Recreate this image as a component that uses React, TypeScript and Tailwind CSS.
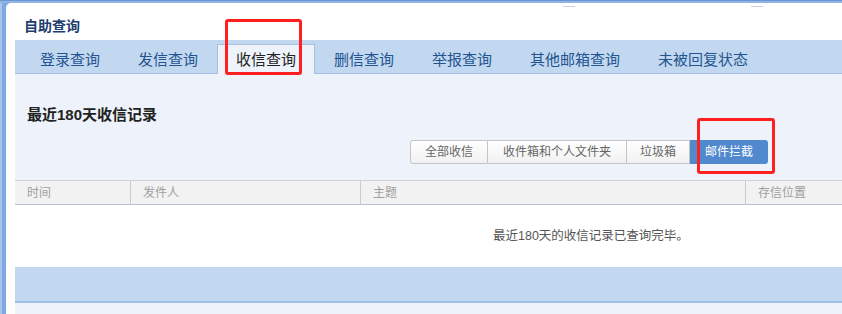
import React from "react";

const FONT = { fontFamily: '"Liberation Sans", "Noto Sans CJK SC", sans-serif' };

const tabs = ["登录查询", "发信查询", "收信查询", "删信查询", "举报查询", "其他邮箱查询", "未被回复状态"];

export default function App() {
  return (
    <div className="relative w-[842px] h-[314px] overflow-hidden bg-[#7fa9e2] flex flex-col" style={FONT}>
      <div className="h-[1px] bg-[#6a96d4] shrink-0" />
      <div className="h-[2px] bg-[#8fb4e6] shrink-0" />
      <div className="flex flex-1 min-h-0">
        <div className="w-[2px] bg-[#a6c4ee]" />
        <div className="w-[4px] bg-[#7fa9e2]" />
        <div className="flex-1 bg-white rounded-tl-[5px] pl-[9px] flex flex-col min-w-0">
          <div className="h-[37px] shrink-0 flex items-center pl-[9px] pt-[8px]">
            <span className="text-[14px] font-bold text-[#1d3d6f] leading-none">自助查询</span>
          </div>
          <div className="h-[34px] shrink-0 bg-[#c2d8f1] border-b border-[#a3bfe0] flex items-end pl-[6px]">
            {tabs.map((t) =>
              t === "收信查询" ? (
                <div
                  key={t}
                  className="h-[30px] -mb-px px-[18px] border border-b-0 border-[#a6c0df] bg-[#eef3fb] flex items-center text-[15px] text-[#222] leading-none"
                >
                  {t}
                </div>
              ) : (
                <div
                  key={t}
                  className="h-[30px] -mb-px px-[18px] border border-transparent border-b-0 flex items-center text-[15px] text-[#24548f] leading-none"
                >
                  {t}
                </div>
              )
            )}
          </div>
          <div className="h-[106px] shrink-0 bg-[#eef3fb] flex flex-col">
            <div className="pt-[33px] pl-[12px] text-[15px] font-bold text-[#222] leading-[16px]">最近180天收信记录</div>
            <div className="mt-[17px] flex justify-end pr-[74px]">
              <div className="flex h-[24px] text-[12px] leading-none">
                <div className="px-[14px] flex items-center border border-[#c4c4c4] rounded-l-[3px] bg-gradient-to-b from-white to-[#f1f1f1] text-[#666]">全部收信</div>
                <div className="px-[15px] flex items-center border border-l-0 border-[#c4c4c4] bg-gradient-to-b from-white to-[#f1f1f1] text-[#666]">收件箱和个人文件夹</div>
                <div className="px-[13px] flex items-center border border-l-0 border-[#c4c4c4] bg-gradient-to-b from-white to-[#f1f1f1] text-[#666]">垃圾箱</div>
                <div className="px-[15px] flex items-center rounded-r-[3px] bg-[#5189cf] text-white">邮件拦截</div>
              </div>
            </div>
          </div>
          <div className="h-[25px] shrink-0 flex bg-[#f2f2f2] border-t border-[#cdd2d8] border-b border-b-[#b9c3cd] text-[12px] text-[#a0a0a0] leading-none">
            <div className="w-[115px] pl-[12px] flex items-center">时间</div>
            <div className="w-[230px] pl-[12px] flex items-center border-l border-[#cccccc]">发件人</div>
            <div className="w-[385px] pl-[12px] flex items-center border-l border-[#cccccc]">主题</div>
            <div className="flex-1 pl-[12px] flex items-center border-l border-[#cccccc]">存信位置</div>
          </div>
          <div className="h-[62px] shrink-0 bg-white flex items-center pl-[478px] text-[12.5px] text-[#555] leading-none">
            最近180天的收信记录已查询完毕。
          </div>
          <div className="h-[36px] shrink-0 bg-[#c2d8f1] border-b-2 border-[#a3bfe0]" />
          <div className="flex-1 bg-[#eef3fb]" />
        </div>
      </div>

      <div className="absolute left-[563px] top-[6px] w-[12px] h-[1px] bg-[#c8d2e2]" />
      <div className="absolute left-[751px] top-[6px] w-[12px] h-[1px] bg-[#c8d2e2]" />

      <div className="absolute left-[225px] top-[19px] w-[77px] h-[56px] border-[3px] border-[#ff1f1f] rounded-[3px]" />
      <div className="absolute left-[697px] top-[118px] w-[78px] h-[56px] border-[3px] border-[#ff1f1f] rounded-[3px]" />
    </div>
  );
}
